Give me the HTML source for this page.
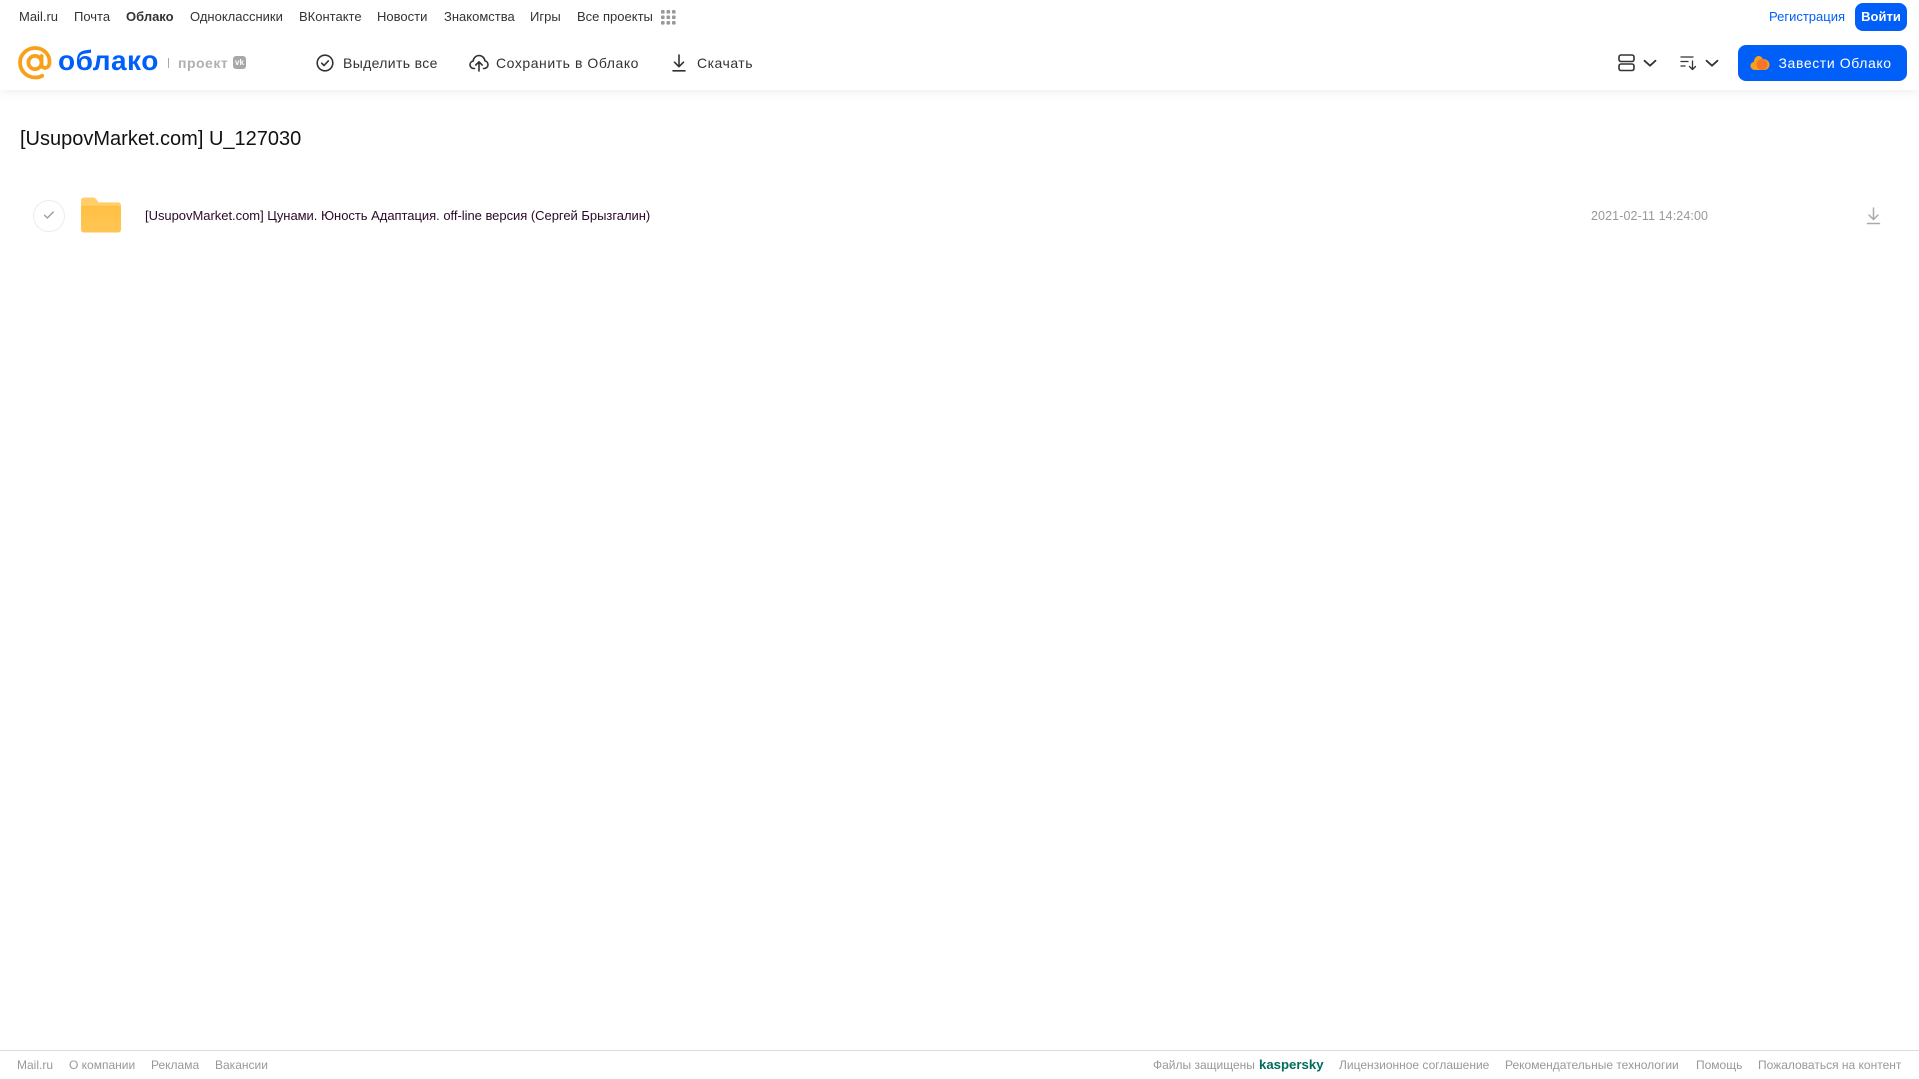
<!DOCTYPE html>
<html lang="ru"><head><meta charset="utf-8"><title>Облако</title>
<style>
html,body{margin:0;padding:0;width:1919px;height:1079px;overflow:hidden;background:#fff;font-family:"Liberation Sans","DejaVu Sans",sans-serif}
.t{position:absolute;white-space:nowrap;line-height:16px}
.n{font-size:13px;top:9px;color:#333}
.a{font-size:14px;top:55px;color:#333;letter-spacing:.35px}
.f{font-size:12px;top:1057px;color:#999}
svg{position:absolute}
</style></head><body>
<div style="position:absolute;left:0;top:0;width:1919px;height:90px;background:#fff;box-shadow:0 2px 10px rgba(0,0,0,.07)"></div>

<span class="t n" style="left:19px">Mail.ru</span>
<span class="t n" style="left:74px">Почта</span>
<span class="t n" style="left:126px;font-weight:bold">Облако</span>
<span class="t n" style="left:190px">Одноклассники</span>
<span class="t n" style="left:299px">ВКонтакте</span>
<span class="t n" style="left:377px">Новости</span>
<span class="t n" style="left:444px">Знакомства</span>
<span class="t n" style="left:530px">Игры</span>
<span class="t n" style="left:577px">Все проекты</span>
<svg style="left:661px;top:10px" width="15" height="15" fill="#999"><rect x="0" y="0" width="3.6" height="3.6" rx="1"/><rect x="5.5" y="0" width="3.6" height="3.6" rx="1"/><rect x="11" y="0" width="3.6" height="3.6" rx="1"/><rect x="0" y="5.5" width="3.6" height="3.6" rx="1"/><rect x="5.5" y="5.5" width="3.6" height="3.6" rx="1"/><rect x="11" y="5.5" width="3.6" height="3.6" rx="1"/><rect x="0" y="11" width="3.6" height="3.6" rx="1"/><rect x="5.5" y="11" width="3.6" height="3.6" rx="1"/><rect x="11" y="11" width="3.6" height="3.6" rx="1"/></svg>

<span class="t n" style="left:1769px;color:#005ff9">Регистрация</span>
<div style="position:absolute;left:1855px;top:3px;width:52px;height:28px;border-radius:8px;background:#005ff9;color:#fff;font-size:13px;font-weight:bold;text-align:center;line-height:27px">Войти</div>

<svg style="left:18px;top:46px" width="34" height="34" viewBox="0 0 34 34" fill="none" stroke="#f9a01b" stroke-width="3.8" stroke-linecap="round"><circle cx="17" cy="16.5" r="6.6"/><path d="M23.6 10v8.5c0 4.8 7.4 4.800 7.900-1.500C32.200 8.500 25.500 2 17 2 9 2 2 8.500 2 16.500 2 25 9 31.500 17 31.500c2.800 0 5.200-.6 7.200-1.700"/></svg>
<span class="t" style="left:58px;top:44px;font-size:28px;line-height:34px;font-weight:bold;color:#005ff9;letter-spacing:.5px">облако</span>
<div style="position:absolute;left:168px;top:58px;width:1px;height:10px;background:#aaa"></div>
<span class="t" style="left:178px;top:55px;font-size:14px;font-weight:bold;color:#b0b0b0;letter-spacing:.5px">проект</span>
<div style="position:absolute;left:233px;top:56px;width:13px;height:13px;border-radius:3px;background:#a8a8a8;color:#fff;font-size:8px;font-weight:bold;line-height:13px;text-align:center">vk</div>

<svg style="left:316px;top:54px" width="18" height="18" viewBox="0 0 18 18" fill="none" stroke="#333" stroke-width="1.6" stroke-linecap="round" stroke-linejoin="round"><circle cx="9" cy="9" r="7.800"/><path d="M5.700 9.200l2.300 2.300 4.300-4.600"/></svg>
<span class="t a" style="left:343px">Выделить все</span>
<svg style="left:469px;top:54px" width="20" height="18" viewBox="0 0 20 18" fill="none" stroke="#333" stroke-width="1.6" stroke-linecap="round" stroke-linejoin="round"><path d="M5.500 14.500H4.800C2.600 14.500 1 12.800 1 10.800c0-1.900 1.300-3.400 3.100-3.700C4.500 3.900 7 1.500 10 1.500c3 0 5.500 2.300 5.900 5.300 1.800.4 3.100 2 3.100 3.900 0 2-1.600 3.800-3.800 3.800h-.7"/><path d="M10 17V8M6.800 11L10 7.800 13.200 11"/></svg>
<span class="t a" style="left:496px;letter-spacing:.55px">Сохранить в Облако</span>
<svg style="left:671px;top:54px" width="16" height="18" viewBox="0 0 16 18" fill="none" stroke="#333" stroke-width="1.600" stroke-linecap="round" stroke-linejoin="round"><path d="M8 1v11.500M3.500 8.200L8 12.700l4.500-4.500M2 16.800h12"/></svg>
<span class="t a" style="left:697px;letter-spacing:.5px">Скачать</span>

<svg style="left:1618px;top:54px" width="17" height="18" viewBox="0 0 17 18" fill="none" stroke="#333" stroke-width="1.600"><rect x="1" y="1" width="15" height="6.500" rx="2"/><rect x="1" y="10" width="15" height="6.500" rx="2"/></svg>
<svg style="left:1643px;top:59px" width="14" height="9" viewBox="0 0 14 9" fill="none" stroke="#333" stroke-width="1.800" stroke-linecap="round" stroke-linejoin="round"><path d="M1.500 1.700L7 6.700l5.500-5"/></svg>
<svg style="left:1680px;top:55px" width="18" height="16" viewBox="0 0 18 16" fill="none" stroke="#333" stroke-width="1.300" stroke-linecap="round" stroke-linejoin="round"><path d="M1 2h12M1 6.500h7M1 11h4M12.500 6v8.500M9.500 11.500l3 3 3-3"/></svg>
<svg style="left:1705px;top:59px" width="14" height="9" viewBox="0 0 14 9" fill="none" stroke="#333" stroke-width="1.800" stroke-linecap="round" stroke-linejoin="round"><path d="M1.500 1.700L7 6.700l5.500-5"/></svg>

<div style="position:absolute;left:1738px;top:45px;width:169px;height:36px;border-radius:8px;background:#005ff9"></div>
<svg style="left:1750px;top:54px" width="20" height="18" viewBox="0 0 20 18"><path d="M5 16C2.200 16 .5 14 .5 11.800c0-2 1.400-3.500 3.200-3.800C4.200 4.500 6 2 8.500 2c2.100 0 3.600 1.300 4.300 3 3.600-.4 6.700 2.300 6.700 5.800 0 2.900-2.300 5.200-5 5.200z" fill="#f9a01b"/><circle cx="12" cy="10.500" r="5.500" fill="#f5752b"/></svg>
<span class="t" style="left:1778.500px;top:55px;font-size:14px;color:#fff;letter-spacing:.6px">Завести Облако</span>

<span class="t" style="left:20px;top:127px;font-size:20px;line-height:24px;color:#111">[UsupovMarket.com] U_127030</span>

<div style="position:absolute;left:33px;top:200px;width:30px;height:30px;border:1px solid #ececec;border-radius:50%"></div>
<svg style="left:43px;top:210px" width="12" height="10" viewBox="0 0 12 10" fill="none" stroke="#999" stroke-width="1.300" stroke-linecap="round" stroke-linejoin="round"><path d="M1.500 5.200l2.800 2.800 6-6"/></svg>
<svg style="left:81px;top:197px" width="40" height="36" viewBox="0 0 41 36"><defs><linearGradient id="g" x1="0" y1="0" x2="0" y2="1"><stop offset="0" stop-color="#ffc043"/><stop offset="1" stop-color="#ffc555"/></linearGradient></defs><path d="M0 3a3 3 0 0 1 3-3h9c2 0 3 .8 4 2.200L18 5h20a3 3 0 0 1 3 3v5H0z" fill="#ffcf6b"/><path d="M0 8.500h38a3 3 0 0 1 3 3V33a3 3 0 0 1-3 3H3a3 3 0 0 1-3-3z" fill="url(#g)"/></svg>
<span class="t" style="left:145px;top:208px;font-size:13px;letter-spacing:-.03px;color:#2a0a28">[UsupovMarket.com] Цунами. Юность Адаптация. off-line версия (Сергей Брызгалин)</span>
<span class="t" style="left:1591px;top:208px;font-size:12.500px;letter-spacing:.1px;color:#999">2021-02-11 14:24:00</span>
<svg style="left:1866px;top:207px" width="15" height="18" viewBox="0 0 15 18" fill="none" stroke="#aaa" stroke-width="1.500" stroke-linecap="round" stroke-linejoin="round"><path d="M7.500 1v11M3 8l4.500 4.500L12 8M1.500 16.500h12"/></svg>

<div style="position:absolute;left:0;top:1050px;width:1919px;height:1px;background:#dcdcdc"></div>
<span class="t f" style="left:17px">Mail.ru</span>
<span class="t f" style="left:69px">О компании</span>
<span class="t f" style="left:151px">Реклама</span>
<span class="t f" style="left:215px">Вакансии</span>
<span class="t f" style="left:1153px">Файлы защищены</span>
<span class="t" style="left:1259px;top:1057px;font-size:13.200px;font-weight:bold;color:#006d5c">kaspersky</span>
<span class="t f" style="left:1339px">Лицензионное соглашение</span>
<span class="t f" style="left:1505px">Рекомендательные технологии</span>
<span class="t f" style="left:1696px">Помощь</span>
<span class="t f" style="left:1758px">Пожаловаться на контент</span>
</body></html>
